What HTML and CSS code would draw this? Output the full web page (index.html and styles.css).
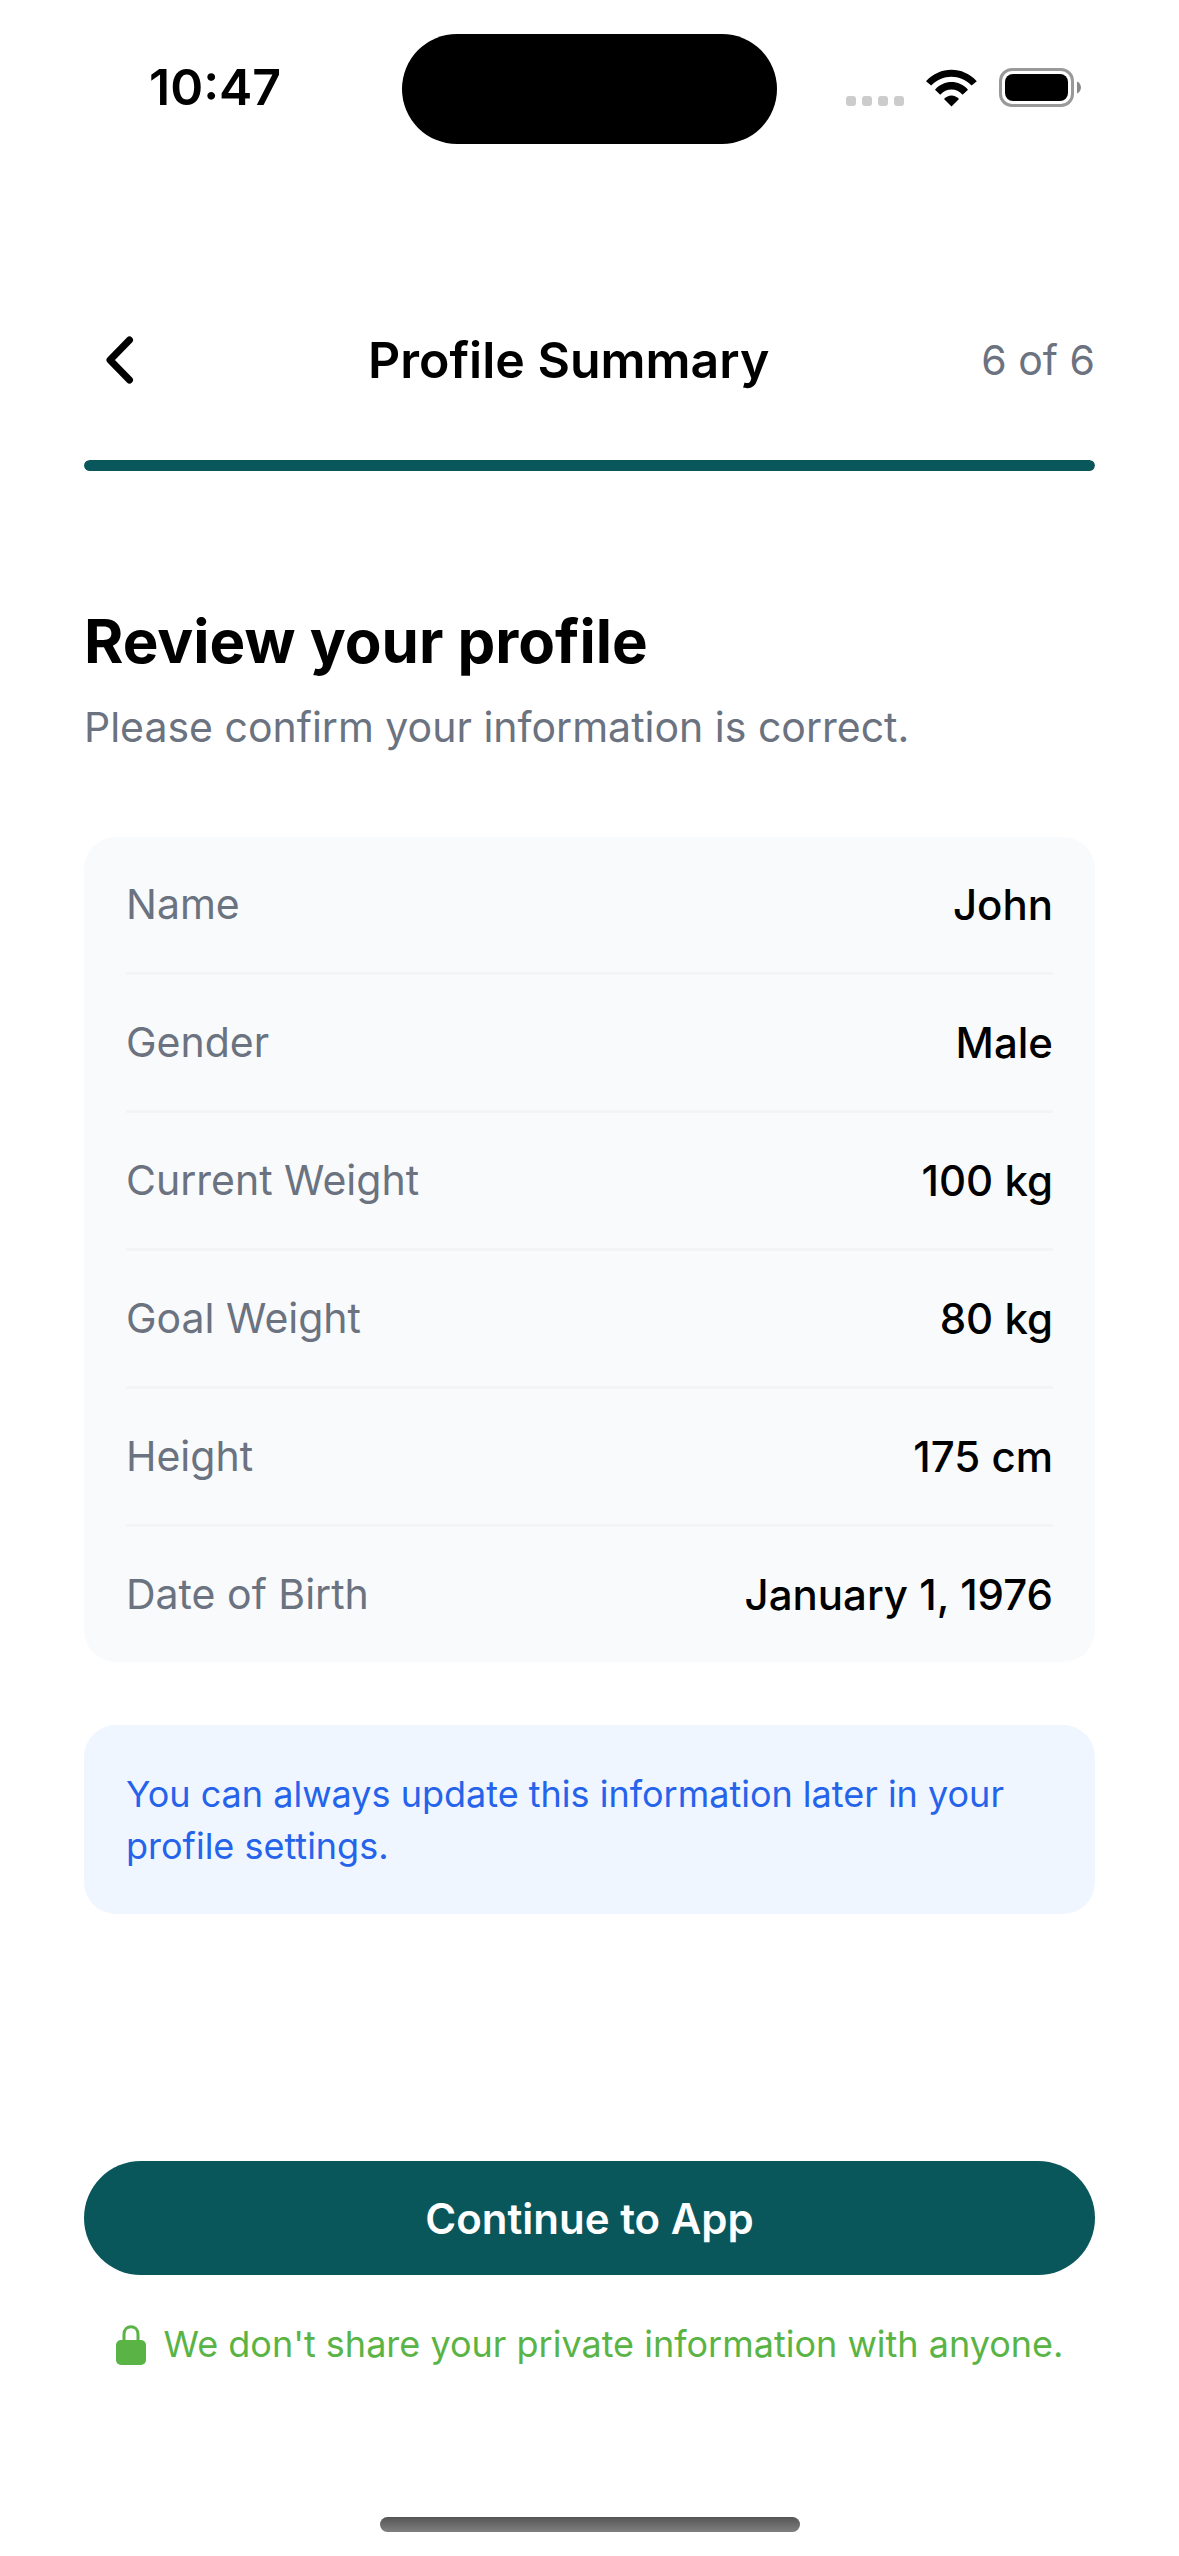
FILE: index.html
```html
<!DOCTYPE html>
<html lang="en">
<head>
  <meta charset="utf-8">
  <meta name="viewport" content="width=device-width, initial-scale=1">
  <title>Profile Summary</title>
  <link rel="stylesheet" href="styles.css">
</head>
<body>
  <div class="screen">
    <div class="status-bar">
      <time class="clock">10:47</time>
      <div class="island"></div>
      <div class="status-icons">
        <div class="signal"><span></span><span></span><span></span><span></span></div>
        <svg class="wifi" viewBox="0 0 51 38" aria-hidden="true">
          <path d="M0 12.200C14-3.200 37-3.200 50.800 12.200L45.600 16.600C34.500 4.800 16.300 4.800 5.200 16.600Z"/>
          <path d="M9 20.700C18 10.500 33 10.500 42 20.700L36.600 25.700C30.600 18.600 20.400 18.600 14.200 25.700Z"/>
          <path d="M18 30C22 25.200 29 25.200 33 30L25.500 37.600Z"/>
        </svg>
        <svg class="battery" viewBox="0 0 82 39" aria-hidden="true">
          <rect x="1.500" y="1.500" width="72" height="36" rx="11.500" fill="none" stroke="#999" stroke-width="3"/>
          <rect x="6" y="6" width="63" height="27" rx="8"/>
          <path d="M78 13.500C83.300 15.500 83.300 23.500 78 25.500Z" fill="#888"/>
        </svg>
      </div>
    </div>

    <header class="header">
      <button class="back" type="button" aria-label="Back">
        <svg viewBox="0 0 28 48" aria-hidden="true">
          <path d="M23.500 4L4 24L23.500 44"/>
        </svg>
      </button>
      <h1 class="title">Profile Summary</h1>
      <span class="step">6 of 6</span>
    </header>
    <div class="progress" role="progressbar" aria-label="Step" aria-valuemin="0" aria-valuemax="6" aria-valuenow="6">
      <div class="progress-fill" style="width: 100%"></div>
    </div>

    <main class="content">
      <h2 class="heading">Review your profile</h2>
      <p class="subheading">Please confirm your information is correct.</p>

      <dl class="summary">
        <div class="row"><dt>Name</dt><dd>John</dd></div>
        <div class="row"><dt>Gender</dt><dd>Male</dd></div>
        <div class="row"><dt>Current Weight</dt><dd>100 kg</dd></div>
        <div class="row"><dt>Goal Weight</dt><dd>80 kg</dd></div>
        <div class="row"><dt>Height</dt><dd>175 cm</dd></div>
        <div class="row"><dt>Date of Birth</dt><dd>January 1, 1976</dd></div>
      </dl>

      <p class="note">You can always update this information later in your profile settings.</p>
    </main>

    <footer class="footer">
      <button class="continue" type="button">Continue to App</button>
      <p class="privacy">
        <svg class="lock" viewBox="0 0 30 40" aria-hidden="true">
          <path d="M8 17V9.500C8 -1 22 -1 22 9.500V17" fill="none" stroke="currentColor" stroke-width="3"/>
          <rect x="0" y="15" width="30" height="25" rx="5" fill="currentColor"/>
        </svg>
        We don't share your private information with anyone.
      </p>
      <div class="home-indicator"></div>
    </footer>
  </div>
</body>
</html>
```
FILE: styles.css
```css
* {
  box-sizing: border-box;
}

body,
h1,
h2,
p,
dl,
dd {
  margin: 0;
}

body {
  background: #fff;
  color: #000;
  font-family: Inter, "Liberation Sans", sans-serif;
  font-size: 42px;
  line-height: 51px;
}

button {
  border: 0;
  padding: 0;
  font: inherit;
  cursor: pointer;
}

svg {
  display: block;
  flex: none;
}

.screen {
  display: flex;
  flex-direction: column;
  min-height: 100vh;
  padding: 0 84px;
}

.status-bar {
  display: grid;
  grid-template-columns: 1fr 375px 1fr;
  align-items: center;
  height: 110px;
  margin-top: 34px;
}

.clock {
  padding: 0 0 4px 65px;
  font-size: 50px;
  font-weight: 600;
}

.island {
  height: 110px;
  border-radius: 55px;
  background: #000;
}

.status-icons {
  display: flex;
  justify-content: flex-end;
  align-items: flex-end;
  padding: 0 14px 4px 0;
}

.signal {
  display: flex;
  gap: 6px;
  margin-right: 22px;
  padding-bottom: 1px;
}

.signal span {
  width: 10px;
  height: 10px;
  border-radius: 3px;
  background: #ccc;
}

.wifi {
  width: 51px;
  height: 38px;
  margin-right: 22px;
}

.battery {
  width: 82px;
  height: 39px;
}

.header {
  display: flex;
  justify-content: space-between;
  align-items: center;
  height: 72px;
  margin-top: 180px;
}

.back {
  display: flex;
  justify-content: center;
  align-items: center;
  width: 72px;
  height: 72px;
  background: none;
}

.back svg {
  width: 28px;
  height: 48px;
  fill: none;
  stroke: #000;
  stroke-width: 7px;
  stroke-linecap: round;
  stroke-linejoin: round;
}

.title {
  font-size: 50px;
  font-weight: 600;
}

.step {
  color: #6b7280;
  font-size: 41px;
}

.progress {
  height: 11px;
  margin-top: 64px;
  border-radius: 6px;
  background: #e5e7eb;
  overflow: hidden;
}

.progress-fill {
  height: 100%;
  border-radius: 6px;
  background: #09565b;
}

.content {
  padding-top: 130px;
}

.heading {
  font-size: 60px;
  font-weight: 700;
  line-height: 80px;
}

.subheading {
  margin-top: 21px;
  color: #6b7280;
  font-size: 41px;
}

.summary {
  margin-top: 84px;
  padding: 0 42px;
  border-radius: 32px;
  background: #f9fafc;
}

.row {
  display: flex;
  justify-content: space-between;
  padding: 42px 0;
  border-bottom: 3px solid #f3f4f6;
}

.row:last-child {
  border-bottom: 0;
}

.row dt {
  color: #6b7280;
  font-size: 41px;
}

.row dd {
  font-weight: 500;
}

.note {
  margin-top: 63px;
  padding: 43px 42px 42px;
  border-radius: 32px;
  background: #eff6ff;
  color: #2563eb;
  font-size: 36px;
  line-height: 52px;
}

.footer {
  margin-top: auto;
}

.continue {
  width: 100%;
  height: 114px;
  border-radius: 57px;
  background: #09565b;
  color: #fff;
  font-weight: 600;
}

.privacy {
  display: flex;
  justify-content: center;
  align-items: center;
  gap: 18px;
  margin-top: 44px;
  color: #5ab445;
  font-size: 36px;
}

.lock {
  width: 30px;
  height: 40px;
}

.home-indicator {
  width: 420px;
  height: 15px;
  margin: 147px auto 24px;
  border-radius: 8px;
  background: linear-gradient(#555, #808080);
}
```
